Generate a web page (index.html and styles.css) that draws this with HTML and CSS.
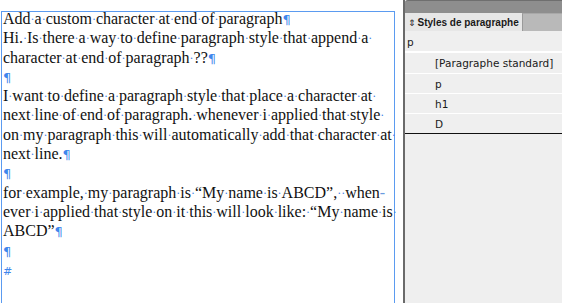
FILE: index.html
```html
<!DOCTYPE html>
<html lang="en">

<head>
  <meta charset="UTF-8">
  <title>Add a custom character at end of paragraph</title>
  <link rel="stylesheet" href="styles.css">
</head>

<body>
  <div class="story">
    <div class="line">Add<i>·</i>a<i>·</i>custom<i>·</i>character<i>·</i>at<i>·</i>end<i>·</i>of<i>·</i>paragraph<b>¶</b></div>
    <div class="line">Hi.<i>·</i>Is<i>·</i>there<i>·</i>a<i>·</i>way<i>·</i>to<i>·</i>define<i>·</i>paragraph<i>·</i>style<i>·</i>that<i>·</i>append<i>·</i>a<i>·</i></div>
    <div class="line">character<i>·</i>at<i>·</i>end<i>·</i>of<i>·</i>paragraph<i>·</i>??<b>¶</b></div>
    <div class="line"><b>¶</b></div>
    <div class="line">I<i>·</i>want<i>·</i>to<i>·</i>define<i>·</i>a<i>·</i>paragraph<i>·</i>style<i>·</i>that<i>·</i>place<i>·</i>a<i>·</i>character<i>·</i>at<i>·</i></div>
    <div class="line">next<i>·</i>line<i>·</i>of<i>·</i>end<i>·</i>of<i>·</i>paragraph.<i>·</i>whenever<i>·</i>i<i>·</i>applied<i>·</i>that<i>·</i>style<i>·</i></div>
    <div class="line">on<i>·</i>my<i>·</i>paragraph<i>·</i>this<i>·</i>will<i>·</i>automatically<i>·</i>add<i>·</i>that<i>·</i>character<i>·</i>at<i>·</i></div>
    <div class="line">next<i>·</i>line.<b>¶</b></div>
    <div class="line"><b>¶</b></div>
    <div class="line">for<i>·</i>example,<i>·</i>my<i>·</i>paragraph<i>·</i>is<i>·</i>“My<i>·</i>name<i>·</i>is<i>·</i>ABCD”,<i>·</i><i>·</i>when<span class="hyph">-</span></div>
    <div class="line">ever<i>·</i>i<i>·</i>applied<i>·</i>that<i>·</i>style<i>·</i>on<i>·</i>it<i>·</i>this<i>·</i>will<i>·</i>look<i>·</i>like:<i>·</i>“My<i>·</i>name<i>·</i>is<i>·</i></div>
    <div class="line">ABCD”<b>¶</b></div>
    <div class="line"><b>¶</b></div>
    <div class="line"><b class="end">#</b></div>
  </div>

  <div class="panel">
    <div class="panel-top"></div>
    <div class="tabs">
      <div class="tab"><span class="arrows">⇕</span>Styles de paragraphe</div>
      <div class="tab-rest"></div>
    </div>
    <div class="current">p</div>
    <ul class="style-list">
      <li>[Paragraphe standard]</li>
      <li>p</li>
      <li>h1</li>
      <li>D</li>
    </ul>
  </div>
</body>

</html>
```

FILE: styles.css
```css
body {
  margin: 0;
  display: flex;
  height: 303px;
  overflow: hidden;
  background: #fff;
}

/* text frame */
.story {
  width: 391px;
  margin-top: 11px;
  margin-left: 1px;
  padding: 0 0 0 1px;
  border: 1px solid #5b9bf0;
  border-bottom: none;
  font-family: "Liberation Serif", serif;
  font-size: 16px;
  line-height: 19.3px;
  color: #111;
}

.line {
  white-space: nowrap;
  height: 19.3px;
}

.line:first-child {
  margin-top: -3px;
}

.story i {
  font-style: normal;
  color: #3f82e6;
  font-size: 12px;
  display: inline-block;
  width: 4px;
  text-align: center;
  vertical-align: 1px;
}

.story b {
  font-weight: normal;
  color: #3f86ec;
  font-family: "DejaVu Sans", sans-serif;
  font-size: 13px;
}

.story b.end {
  font-size: 11px;
}

.hyph {
  color: #6b9be0;
}

/* paragraph styles panel */
.panel {
  flex: 1;
  margin-left: 8px;
  background: #efefef;
  border-left: 2px solid #6a6a6a;
  font-family: "DejaVu Sans", sans-serif;
  font-size: 10.5px;
  color: #1a1a1a;
}

.panel-top {
  height: 13px;
  background: #8e8e8e;
  border-top: 1px solid #6f6f6f;
  border-top-left-radius: 3px;
  box-sizing: border-box;
}

.tabs {
  display: flex;
  height: 18px;
}

.tab {
  width: 117px;
  background: #e7e7e7;
  font-family: "Liberation Sans", sans-serif;
  font-weight: bold;
  font-size: 10px;
  line-height: 19px;
  padding-left: 3px;
  box-sizing: border-box;
  white-space: nowrap;
  overflow: hidden;
}

.arrows {
  font-weight: normal;
  font-size: 9px;
  margin-right: 2px;
  font-family: "DejaVu Sans", sans-serif;
}

.tab-rest {
  flex: 1;
  background: #b9b9b9;
  border-left: 1px solid #9a9a9a;
  border-top: 1px solid #a8a8a8;
}

.current {
  height: 20px;
  line-height: 22px;
  padding-left: 2px;
  border-bottom: 2px solid #fff;
}

.style-list {
  list-style: none;
  margin: 0;
  padding: 0;
  border-bottom: 1px solid #111;
}

.style-list li {
  height: 19px;
  line-height: 20px;
  padding-left: 30px;
  border-top: 1px solid #fff;
}

.style-list li:first-child {
  height: 20px;
  border-top: none;
}
```
